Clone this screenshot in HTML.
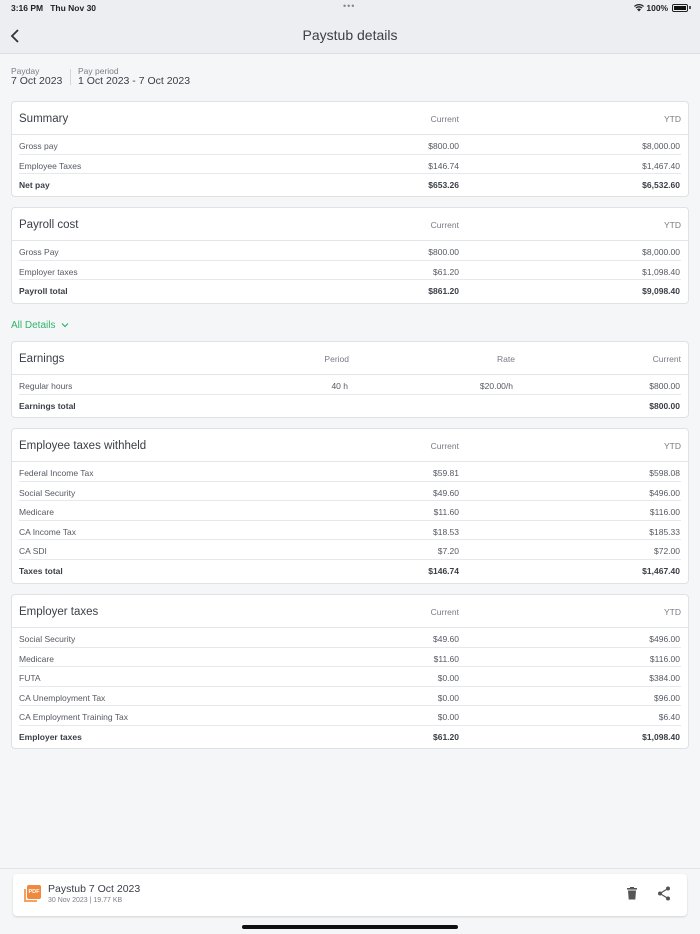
<!DOCTYPE html>
<html><head><meta charset="utf-8"><style>
*{margin:0;padding:0;box-sizing:border-box}
body{width:700px;height:934px;background:#f5f6f8;font-family:"Liberation Sans",sans-serif;color:#3c4048;position:relative;overflow:hidden}
.top{position:absolute;left:0;top:0;width:700px;height:54px;background:#edeef2;border-bottom:1px solid #dfe0e4}
.abs{position:absolute}
.card{position:absolute;left:11px;width:678px;background:#fff;border:1px solid #dfe1e5;border-radius:4px}
.hd{position:relative;height:33px;border-bottom:1px solid #e3e5e9}
.hd .t{position:absolute;left:7px;top:11px;font-size:11.5px;color:#3a3e46}
.hd .c{position:absolute;top:12px;font-size:8.5px;color:#777b83}
.row{position:relative;height:19.6px;margin:0 7px;border-bottom:1px solid #e6e8eb}
.row:last-child{border-bottom:none}
.row span{position:absolute;top:6px;font-size:8.5px;color:#555961;white-space:nowrap}
.row.b span{font-weight:bold;color:#3a3e46}
.l{left:0}
.r1{right:222px}
.r2{right:1px}
.c1{right:229px}.c2{right:7px}
</style></head><body>
<div class="top">
 <div class="abs" style="left:11px;top:3px;font-size:8.5px;font-weight:bold;color:#222">3:16 PM&nbsp;&nbsp; Thu Nov 30</div>
 <div class="abs" style="left:343px;top:1px;font-size:9px;color:#888;letter-spacing:1px">•••</div>
 <div class="abs" style="left:634px;top:3px;font-size:8.5px;font-weight:bold;color:#222">
  <svg width="10" height="8" viewBox="0 0 10 8" style="vertical-align:-1px"><path d="M5 7.5L7 5.3A3 3 0 0 0 3 5.3Z M1.5 3.6A5 5 0 0 1 8.5 3.6L7.6 4.5A3.8 3.8 0 0 0 2.4 4.5Z M0 2A7.3 7.3 0 0 1 10 2L9.2 2.9A6.1 6.1 0 0 0 .8 2.9Z" fill="#222"/></svg> 100%
 </div>
 <div class="abs" style="left:672px;top:4px;width:16px;height:8px;border:1px solid #222;border-radius:2px;padding:1px"><div style="width:100%;height:100%;background:#111"></div></div>
 <div class="abs" style="left:689px;top:6px;width:1.5px;height:3px;background:#555"></div>
 <svg class="abs" style="left:10px;top:29px" width="10" height="14" viewBox="0 0 10 14"><path d="M8 1L2 7L8 13" stroke="#333" stroke-width="1.8" fill="none"/></svg>
 <div class="abs" style="left:0;width:700px;top:27px;text-align:center;font-size:14px;color:#3a3e46">Paystub details</div>
</div>
<div class="abs" style="left:11px;top:66px;font-size:8.5px;color:#7a7e86">Payday</div>
<div class="abs" style="left:11px;top:75px;font-size:10.5px;color:#3a3e46">7 Oct 2023</div>
<div class="abs" style="left:70px;top:69px;width:1px;height:16px;background:#d5d7db"></div>
<div class="abs" style="left:78px;top:66px;font-size:8.5px;color:#7a7e86">Pay period</div>
<div class="abs" style="left:78px;top:75px;font-size:10.5px;color:#3a3e46">1 Oct 2023 - 7 Oct 2023</div>

<div class="card" style="top:101px;height:96px">
 <div class="hd"><span class="t">Summary</span><span class="c c1">Current</span><span class="c c2">YTD</span></div>
 <div class="row"><span class="l">Gross pay</span><span class="r1">$800.00</span><span class="r2">$8,000.00</span></div>
 <div class="row"><span class="l">Employee Taxes</span><span class="r1">$146.74</span><span class="r2">$1,467.40</span></div>
 <div class="row b"><span class="l">Net pay</span><span class="r1">$653.26</span><span class="r2">$6,532.60</span></div>
</div>
<div class="card" style="top:207px;height:97px">
 <div class="hd"><span class="t">Payroll cost</span><span class="c c1">Current</span><span class="c c2">YTD</span></div>
 <div class="row"><span class="l">Gross Pay</span><span class="r1">$800.00</span><span class="r2">$8,000.00</span></div>
 <div class="row"><span class="l">Employer taxes</span><span class="r1">$61.20</span><span class="r2">$1,098.40</span></div>
 <div class="row b"><span class="l">Payroll total</span><span class="r1">$861.20</span><span class="r2">$9,098.40</span></div>
</div>
<div class="abs" style="left:11px;top:320px;font-size:10px;color:#2fb468">All Details <svg width="8" height="6" viewBox="0 0 8 6" style="margin-left:3px"><path d="M1 1.5L4 4.5L7 1.5" stroke="#2fb468" stroke-width="1.2" fill="none"/></svg></div>

<div class="card" style="top:341px;height:77px">
 <div class="hd"><span class="t">Earnings</span><span class="c" style="right:339px">Period</span><span class="c" style="right:173px">Rate</span><span class="c c2">Current</span></div>
 <div class="row"><span class="l">Regular hours</span><span style="right:333px">40 h</span><span style="right:168px">$20.00/h</span><span class="r2">$800.00</span></div>
 <div class="row b"><span class="l">Earnings total</span><span class="r2">$800.00</span></div>
</div>
<div class="card" style="top:428px;height:156px">
 <div class="hd"><span class="t">Employee taxes withheld</span><span class="c c1">Current</span><span class="c c2">YTD</span></div>
 <div class="row"><span class="l">Federal Income Tax</span><span class="r1">$59.81</span><span class="r2">$598.08</span></div>
 <div class="row"><span class="l">Social Security</span><span class="r1">$49.60</span><span class="r2">$496.00</span></div>
 <div class="row"><span class="l">Medicare</span><span class="r1">$11.60</span><span class="r2">$116.00</span></div>
 <div class="row"><span class="l">CA Income Tax</span><span class="r1">$18.53</span><span class="r2">$185.33</span></div>
 <div class="row"><span class="l">CA SDI</span><span class="r1">$7.20</span><span class="r2">$72.00</span></div>
 <div class="row b"><span class="l">Taxes total</span><span class="r1">$146.74</span><span class="r2">$1,467.40</span></div>
</div>
<div class="card" style="top:594px;height:155px">
 <div class="hd"><span class="t">Employer taxes</span><span class="c c1">Current</span><span class="c c2">YTD</span></div>
 <div class="row"><span class="l">Social Security</span><span class="r1">$49.60</span><span class="r2">$496.00</span></div>
 <div class="row"><span class="l">Medicare</span><span class="r1">$11.60</span><span class="r2">$116.00</span></div>
 <div class="row"><span class="l">FUTA</span><span class="r1">$0.00</span><span class="r2">$384.00</span></div>
 <div class="row"><span class="l">CA Unemployment Tax</span><span class="r1">$0.00</span><span class="r2">$96.00</span></div>
 <div class="row"><span class="l">CA Employment Training Tax</span><span class="r1">$0.00</span><span class="r2">$6.40</span></div>
 <div class="row b"><span class="l">Employer taxes</span><span class="r1">$61.20</span><span class="r2">$1,098.40</span></div>
</div>

<div class="abs" style="left:0;top:868px;width:700px;height:1px;background:#e2e3e7"></div>
<div class="abs" style="left:13px;top:874px;width:674px;height:42px;background:#fff;border-radius:4px;box-shadow:0 1px 2px rgba(0,0,0,.15)">
 <div class="abs" style="left:11px;top:15px;width:13px;height:13px;border-left:2px solid #f5a25d;border-bottom:2px solid #f5a25d"></div>
 <div class="abs" style="left:14px;top:11px;width:14px;height:14px;background:#f0883e;border-radius:2px;color:#fff;font-size:5.5px;font-weight:bold;line-height:14px;text-align:center">PDF</div>
 <div class="abs" style="left:35px;top:9px;font-size:10.5px;color:#3a3e46">Paystub 7 Oct 2023</div>
 <div class="abs" style="left:35px;top:23px;font-size:7px;color:#7a7e86">30 Nov 2023 | 19.77 KB</div>
 <svg class="abs" style="left:614px;top:13px" width="10" height="13" viewBox="0 0 10 13"><rect x="0" y="1" width="10" height="1.6" fill="#555"/><rect x="3" y="0" width="4" height="1.5" fill="#555"/><path d="M1 3.5H9L8.3 12.5H1.7Z" fill="#555"/></svg>
 <svg class="abs" style="left:644px;top:12px" width="14" height="15" viewBox="0 0 14 15"><circle cx="11" cy="2.5" r="2" fill="#555"/><circle cx="3" cy="7.5" r="2" fill="#555"/><circle cx="11" cy="12.5" r="2" fill="#555"/><path d="M11 2.5L3 7.5L11 12.5" stroke="#555" stroke-width="1.2" fill="none"/></svg>
</div>
<div class="abs" style="left:242px;top:925px;width:216px;height:4px;background:#111;border-radius:2px"></div>
</body></html>
